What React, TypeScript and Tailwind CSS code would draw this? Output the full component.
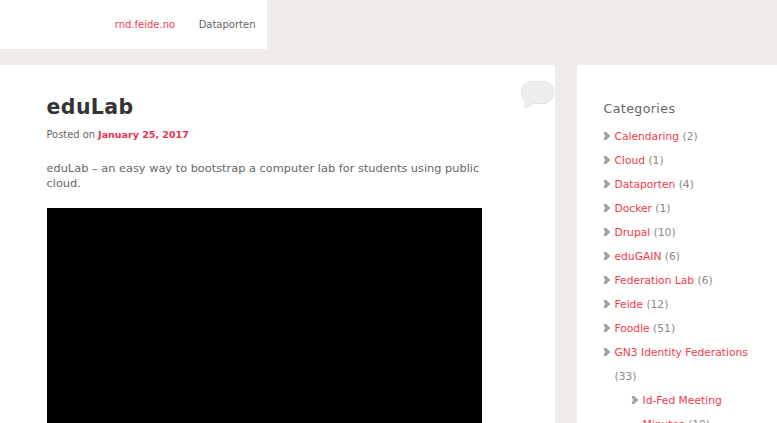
import React from 'react';

interface Category {
  name: string;
  count: number;
}

const categories: Category[] = [
  { name: 'Calendaring', count: 2 },
  { name: 'Cloud', count: 1 },
  { name: 'Dataporten', count: 4 },
  { name: 'Docker', count: 1 },
  { name: 'Drupal', count: 10 },
  { name: 'eduGAIN', count: 6 },
  { name: 'Federation Lab', count: 6 },
  { name: 'Feide', count: 12 },
  { name: 'Foodle', count: 51 },
  { name: 'GN3 Identity Federations', count: 33 },
];

const Arrow = ({ className }: { className: string }) => (
  <svg width="8" height="10" viewBox="0 0 8 10" className={className}>
    <path d="M0.5 1 L3 1 L7.5 5 L3 9 L0.5 9 L2 5 Z" fill="#a0a0a0" />
  </svg>
);

const App: React.FC = () => {
  return (
    <div className="h-[423px] w-[777px] overflow-hidden bg-[#efebe8] font-['DejaVu_Sans',sans-serif] text-[#666666]">
      <header className="flex h-[49px] w-[267px] items-center justify-end gap-[23.5px] bg-white pr-[11.5px] text-[10px]">
        <a className="text-[#f23a4b]">rnd.feide.no</a>
        <a className="text-[#666666]">Dataporten</a>
      </header>

      <div className="mt-[16px] flex items-start justify-between">
        <main className="relative h-[400px] w-[555px] bg-white pl-[46.5px] pt-[27px]">
          <h1 className="text-[20.5px] font-bold leading-[30px] tracking-[0.4px] text-[#333333]">eduLab</h1>
          <p className="mt-[5px] text-[9.9px] leading-[16px] text-[#666666]">
            Posted on <span className="text-[9.5px] font-bold text-[#f0304a]">January 25, 2017</span>
          </p>
          <p className="mt-[18px] w-[445px] text-[11.35px] leading-[14.5px] text-[#666666]">
            eduLab – an easy way to bootstrap a computer lab for students using public cloud.
          </p>
          <div className="mt-[18px] h-[240px] w-[435px] bg-black" />
          <svg
            width="35"
            height="29"
            viewBox="0 0 35 29"
            className="absolute right-0 top-[15px]"
          >
            <path
              d="M12 1.5 H23 C29.5 1.5 33.5 6 33.5 12 C33.5 18 29.5 23.5 23 23.5 H13 C10.5 25.5 8 27 4.5 28 C5.5 26 6 24 5.5 21.5 C3 19.5 1.5 16 1.5 12 C1.5 6 5.5 1.5 12 1.5 Z"
              fill="#eeeeee"
              stroke="#e2e2e2"
              strokeWidth="1"
            />
          </svg>
        </main>

        <aside className="h-[400px] w-[200px] bg-white pl-[26.5px] pr-[25px] pt-[35px]">
          <h2 className="text-[12.6px] leading-[17px] tracking-[0.4px] text-[#666666]">Categories</h2>
          <ul className="mt-[8px] text-[10.7px] leading-[24px]">
            {categories.map((category) => (
              <li key={category.name} className="relative pl-[11px]">
                <Arrow className="absolute left-[-0.5px] top-[6px]" />
                <a className="text-[#f23a4b]">{category.name}</a>{' '}
                <span className="text-[#888888]">({category.count})</span>
              </li>
            ))}
            <li>
              <ul className="pl-[28px]">
                <li className="relative pl-[11px]">
                  <Arrow className="absolute left-[-0.5px] top-[6px]" />
                  <a className="text-[#f23a4b]">Id-Fed Meeting Minutes</a>{' '}
                  <span className="text-[#888888]">(19)</span>
                </li>
              </ul>
            </li>
          </ul>
        </aside>
      </div>
    </div>
  );
};

export default App;
